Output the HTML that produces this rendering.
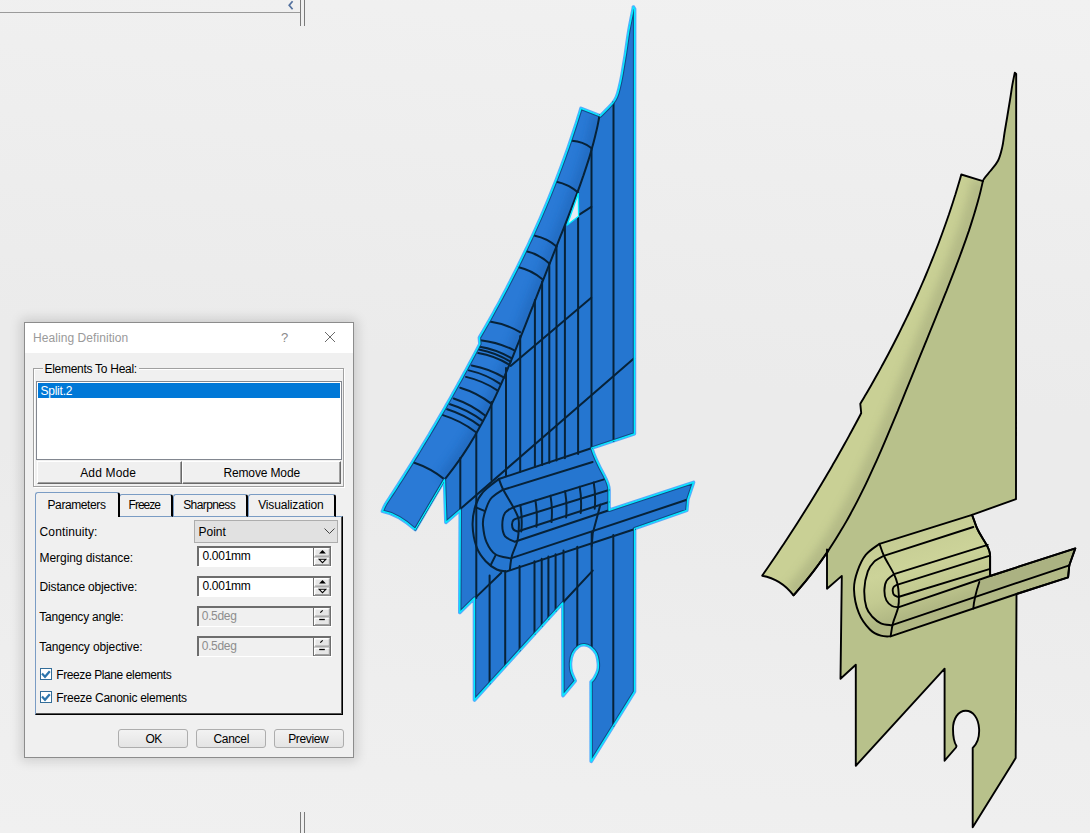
<!DOCTYPE html>
<html><head><meta charset="utf-8">
<style>
html,body{margin:0;padding:0;width:1090px;height:833px;overflow:hidden;}
body{position:relative;background:linear-gradient(185deg,#f1f1f1 0%,#eeeeee 22%,#ebebeb 45%,#ebebeb 58%,#eeeeee 80%,#f0f0f0 100%);font-family:"Liberation Sans",sans-serif;font-size:12px;color:#000;}
.a{position:absolute;}
.t{position:absolute;line-height:12px;white-space:nowrap;font-size:12px;}
#dlg{position:absolute;left:24px;top:322px;width:328px;height:434px;border:1px solid #8c8c8c;background:#f0f0f0;box-shadow:0 0 11px 3px rgba(0,0,0,0.14);}
.etch{position:absolute;border:1px solid #a0a0a0;box-shadow:inset 1px 1px 0 #fff, 1px 1px 0 #fff;}
.btn3d{position:absolute;background:#f0f0f0;border-top:1px solid #fff;border-left:1px solid #fff;border-right:1px solid #696969;border-bottom:1px solid #696969;box-shadow:inset -1px -1px 0 #a0a0a0;box-sizing:border-box;text-align:center;}
.spin{position:absolute;box-sizing:border-box;border-top:2px solid #6d6d6d;border-left:2px solid #6d6d6d;border-bottom:1px solid #fff;border-right:1px solid #fff;background:#fff;}
.spin.dis{background:#f0f0f0;}
.sbtn{position:absolute;box-sizing:border-box;background:#e6e6e6;border-top:1px solid #fff;border-left:1px solid #fff;border-right:1px solid #6d6d6d;border-bottom:1px solid #6d6d6d;}
.pbtn{position:absolute;box-sizing:border-box;border:1px solid #adadad;border-radius:3px;background:linear-gradient(#f2f2f2,#e4e4e4);text-align:center;}
.tab{position:absolute;box-sizing:border-box;border-top:1px solid #7a9cc4;border-left:1px solid #7a9cc4;border-right:2px solid #000;border-radius:3px 3px 0 0;background:#f0f0f0;}
.chk{position:absolute;width:12px;height:12px;box-sizing:border-box;border:1px solid #1d5a84;background:#fff;}
</style></head><body>

<!-- top strip -->
<div class="a" style="left:0;top:12px;width:300px;height:1px;background:#9a9a9a"></div>
<div class="a" style="left:300px;top:0;width:1px;height:26px;background:#7a7a7a"></div>
<div class="a" style="left:304px;top:0;width:1px;height:26px;background:#7a7a7a"></div>
<svg class="a" style="left:285px;top:0" width="12" height="12"><path d="M7.6,1.2 L4.2,5.2 L7.6,9.2" fill="none" stroke="#52709e" stroke-width="1.7"/></svg>
<div class="a" style="left:300px;top:812px;width:1px;height:21px;background:#7a7a7a"></div>
<div class="a" style="left:304px;top:812px;width:1px;height:21px;background:#7a7a7a"></div>

<!-- SVG models -->
<svg class="a" style="left:0;top:0" width="1090" height="833" viewBox="0 0 1090 833" id="models">
<defs>
 <filter id="blur4" x="-20%" y="-20%" width="140%" height="140%"><feGaussianBlur stdDeviation="4"/></filter>
 <linearGradient id="gRib" gradientUnits="userSpaceOnUse" x1="830" y1="450" x2="880" y2="475">
  <stop offset="0" stop-color="#c9d096"/><stop offset="0.5" stop-color="#cbd298"/><stop offset="1" stop-color="#b6be89"/>
 </linearGradient>
 <linearGradient id="gFold" gradientUnits="userSpaceOnUse" x1="900" y1="540" x2="928" y2="630">
  <stop offset="0" stop-color="#c6cd94"/><stop offset="0.3" stop-color="#ccd399"/><stop offset="0.55" stop-color="#c3ca91"/><stop offset="0.8" stop-color="#b0b783"/><stop offset="1" stop-color="#b2b985"/>
 </linearGradient>
 <linearGradient id="bRib" gradientUnits="userSpaceOnUse" x1="450" y1="380" x2="500" y2="405">
  <stop offset="0" stop-color="#2676d2"/><stop offset="0.5" stop-color="#2b7edb"/><stop offset="1" stop-color="#236fc6"/>
 </linearGradient>
</defs>
<g id="blue">
<path d="M633.3,7 L634.6,9 L634.4,433.8 L591.7,448 C594,456 600,468 604.2,475.7 C607,481 609,486 609,490 L609,510.3 L693.5,482.4 L687.7,499.8 L686.8,510.3 L634.6,528.5 L634.5,691.6 L591.2,761.3 L591.1,682 C591.7,681.3 593.4,679.9 594.5,677.9 C595.6,675.9 597.3,672.8 597.9,670.3 C598.5,667.8 598.6,665.5 598.3,662.7 C598.0,659.9 597.5,656.1 596.2,653.5 C594.9,650.9 592.3,648.3 590.3,646.8 C588.3,645.3 586.4,644.8 584.4,644.7 C582.4,644.6 580.5,644.8 578.5,646.3 C576.5,647.8 573.9,650.8 572.6,653.5 C571.3,656.2 570.7,659.6 570.5,662.7 C570.3,665.8 570.6,669.0 571.4,672.0 C572.2,675.0 574.6,679.3 575.2,680.8 L563,695.5 L562.8,602.8 L474.5,700 L474.5,598 L459.8,612.4 L460.3,510 L445.9,522.4 L444.5,479.6 L415.2,529.5 Q398,514 382.4,511.2 C383.0,510.0 384.1,506.9 385.8,504.0 C387.4,501.1 390.2,497.3 392.3,494.0 C394.5,490.7 396.6,487.3 398.7,484.0 C400.9,480.7 403.0,477.3 405.1,474.0 C407.2,470.7 409.3,467.3 411.4,464.0 C413.4,460.7 415.5,457.3 417.6,454.0 C419.6,450.7 421.6,447.3 423.6,444.0 C425.7,440.7 427.7,437.3 429.7,434.0 C431.6,430.7 433.6,427.3 435.6,424.0 C437.5,420.7 439.5,417.3 441.4,414.0 C443.4,410.7 445.3,407.3 447.2,404.0 C449.1,400.7 451.0,397.3 452.8,394.0 C454.7,390.7 456.6,387.3 458.4,384.0 C460.3,380.7 462.1,377.3 463.9,374.0 C465.8,370.7 467.6,367.3 469.3,364.0 C471.1,360.7 472.9,357.3 474.7,354.0 C476.4,350.7 479.0,345.7 479.9,344.0 L479.4,337.7 C480.3,336.1 483.0,331.6 484.8,328.4 C486.7,325.2 488.6,321.7 490.5,318.4 C492.4,315.1 494.2,311.7 496.0,308.4 C497.9,305.1 499.7,301.7 501.5,298.4 C503.2,295.1 505.0,291.7 506.8,288.4 C508.5,285.1 510.2,281.7 511.9,278.4 C513.6,275.1 515.3,271.7 517.0,268.4 C518.6,265.1 520.3,261.7 521.9,258.4 C523.5,255.1 525.1,251.7 526.7,248.4 C528.3,245.1 529.8,241.7 531.4,238.4 C532.9,235.1 534.4,231.7 535.9,228.4 C537.4,225.1 538.9,221.7 540.4,218.4 C541.8,215.1 543.3,211.7 544.7,208.4 C546.1,205.1 547.5,201.7 548.9,198.4 C550.2,195.1 551.6,191.7 552.9,188.4 C554.3,185.1 555.6,181.7 556.9,178.4 C558.2,175.1 559.4,171.7 560.7,168.4 C561.9,165.1 563.2,161.7 564.4,158.4 C565.6,155.1 566.8,151.7 568.0,148.4 C569.1,145.1 570.3,141.7 571.4,138.4 C572.5,135.1 573.6,131.7 574.7,128.4 C575.8,125.1 576.9,121.7 577.9,118.4 C579.0,115.1 580.5,110.1 581.0,108.4 L600.3,116 C601.4,114.9 604.9,111.5 607.0,109.3 C609.1,107.1 611.4,104.8 613.0,102.8 C614.6,100.8 615.5,99.3 616.5,97.0 C617.5,94.7 618.1,92.7 619.0,89.0 C619.9,85.3 621.0,80.7 622.0,75.0 C623.0,69.3 624.1,62.5 625.3,55.0 C626.5,47.5 627.6,38.0 629.0,30.0 C630.4,22.0 632.8,10.8 633.5,7.0 Z" fill="none" stroke="#3aa0ff" stroke-width="3.6" stroke-linejoin="round" opacity="0.85"/>
<path d="M633.3,7 L634.6,9 L634.4,433.8 L591.7,448 C594,456 600,468 604.2,475.7 C607,481 609,486 609,490 L609,510.3 L693.5,482.4 L687.7,499.8 L686.8,510.3 L634.6,528.5 L634.5,691.6 L591.2,761.3 L591.1,682 C591.7,681.3 593.4,679.9 594.5,677.9 C595.6,675.9 597.3,672.8 597.9,670.3 C598.5,667.8 598.6,665.5 598.3,662.7 C598.0,659.9 597.5,656.1 596.2,653.5 C594.9,650.9 592.3,648.3 590.3,646.8 C588.3,645.3 586.4,644.8 584.4,644.7 C582.4,644.6 580.5,644.8 578.5,646.3 C576.5,647.8 573.9,650.8 572.6,653.5 C571.3,656.2 570.7,659.6 570.5,662.7 C570.3,665.8 570.6,669.0 571.4,672.0 C572.2,675.0 574.6,679.3 575.2,680.8 L563,695.5 L562.8,602.8 L474.5,700 L474.5,598 L459.8,612.4 L460.3,510 L445.9,522.4 L444.5,479.6 L415.2,529.5 Q398,514 382.4,511.2 C383.0,510.0 384.1,506.9 385.8,504.0 C387.4,501.1 390.2,497.3 392.3,494.0 C394.5,490.7 396.6,487.3 398.7,484.0 C400.9,480.7 403.0,477.3 405.1,474.0 C407.2,470.7 409.3,467.3 411.4,464.0 C413.4,460.7 415.5,457.3 417.6,454.0 C419.6,450.7 421.6,447.3 423.6,444.0 C425.7,440.7 427.7,437.3 429.7,434.0 C431.6,430.7 433.6,427.3 435.6,424.0 C437.5,420.7 439.5,417.3 441.4,414.0 C443.4,410.7 445.3,407.3 447.2,404.0 C449.1,400.7 451.0,397.3 452.8,394.0 C454.7,390.7 456.6,387.3 458.4,384.0 C460.3,380.7 462.1,377.3 463.9,374.0 C465.8,370.7 467.6,367.3 469.3,364.0 C471.1,360.7 472.9,357.3 474.7,354.0 C476.4,350.7 479.0,345.7 479.9,344.0 L479.4,337.7 C480.3,336.1 483.0,331.6 484.8,328.4 C486.7,325.2 488.6,321.7 490.5,318.4 C492.4,315.1 494.2,311.7 496.0,308.4 C497.9,305.1 499.7,301.7 501.5,298.4 C503.2,295.1 505.0,291.7 506.8,288.4 C508.5,285.1 510.2,281.7 511.9,278.4 C513.6,275.1 515.3,271.7 517.0,268.4 C518.6,265.1 520.3,261.7 521.9,258.4 C523.5,255.1 525.1,251.7 526.7,248.4 C528.3,245.1 529.8,241.7 531.4,238.4 C532.9,235.1 534.4,231.7 535.9,228.4 C537.4,225.1 538.9,221.7 540.4,218.4 C541.8,215.1 543.3,211.7 544.7,208.4 C546.1,205.1 547.5,201.7 548.9,198.4 C550.2,195.1 551.6,191.7 552.9,188.4 C554.3,185.1 555.6,181.7 556.9,178.4 C558.2,175.1 559.4,171.7 560.7,168.4 C561.9,165.1 563.2,161.7 564.4,158.4 C565.6,155.1 566.8,151.7 568.0,148.4 C569.1,145.1 570.3,141.7 571.4,138.4 C572.5,135.1 573.6,131.7 574.7,128.4 C575.8,125.1 576.9,121.7 577.9,118.4 C579.0,115.1 580.5,110.1 581.0,108.4 L600.3,116 C601.4,114.9 604.9,111.5 607.0,109.3 C609.1,107.1 611.4,104.8 613.0,102.8 C614.6,100.8 615.5,99.3 616.5,97.0 C617.5,94.7 618.1,92.7 619.0,89.0 C619.9,85.3 621.0,80.7 622.0,75.0 C623.0,69.3 624.1,62.5 625.3,55.0 C626.5,47.5 627.6,38.0 629.0,30.0 C630.4,22.0 632.8,10.8 633.5,7.0 Z" fill="#2576d0"/>
<clipPath id="bRibClip"><path d="M599.5,115.6 C599.1,117.3 598.3,122.3 597.6,125.6 C596.9,128.9 596.1,132.3 595.3,135.6 C594.5,138.9 593.7,142.3 592.7,145.6 C591.8,148.9 590.9,152.3 589.9,155.6 C588.9,158.9 587.8,162.3 586.7,165.6 C585.6,168.9 584.5,172.3 583.4,175.6 C582.2,178.9 581.1,182.3 579.9,185.6 C578.7,188.9 577.4,192.3 576.2,195.6 C575.0,198.9 573.7,202.3 572.4,205.6 C571.2,208.9 569.9,212.3 568.6,215.6 C567.3,218.9 566.0,222.3 564.7,225.6 C563.4,228.9 562.1,232.3 560.7,235.6 C559.4,238.9 558.1,242.3 556.8,245.6 C555.5,248.9 554.1,252.3 552.8,255.6 C551.5,258.9 550.2,262.3 548.8,265.6 C547.5,268.9 546.2,272.3 544.9,275.6 C543.6,278.9 542.2,282.3 540.9,285.6 C539.6,288.9 538.3,292.3 537.0,295.6 C535.7,298.9 534.4,302.3 533.1,305.6 C531.7,308.9 530.4,312.3 529.1,315.6 C527.8,318.9 526.5,322.3 525.2,325.6 C523.9,328.9 522.5,332.3 521.2,335.6 C519.9,338.9 518.6,342.3 517.2,345.6 C515.9,348.9 514.5,352.3 513.2,355.6 C511.8,358.9 510.4,362.3 509.0,365.6 C507.6,368.9 506.2,372.3 504.8,375.6 C503.3,378.9 501.9,382.3 500.4,385.6 C498.9,388.9 497.3,392.3 495.8,395.6 C494.2,398.9 492.6,402.3 491.0,405.6 C489.4,408.9 487.7,412.3 486.0,415.6 C484.2,418.9 482.5,422.3 480.6,425.6 C478.8,428.9 476.9,432.3 475.0,435.6 C473.0,438.9 471.0,442.3 468.9,445.6 C466.8,448.9 464.6,452.3 462.4,455.6 C460.1,458.9 457.8,462.3 455.3,465.6 C452.9,468.9 449.5,473.3 447.7,475.6 C445.9,477.9 445.1,478.9 444.5,479.6 L415.2,529.5 Q398,514 382.4,511.2 C383.0,510.0 384.1,506.9 385.8,504.0 C387.4,501.1 390.2,497.3 392.3,494.0 C394.5,490.7 396.6,487.3 398.7,484.0 C400.9,480.7 403.0,477.3 405.1,474.0 C407.2,470.7 409.3,467.3 411.4,464.0 C413.4,460.7 415.5,457.3 417.6,454.0 C419.6,450.7 421.6,447.3 423.6,444.0 C425.7,440.7 427.7,437.3 429.7,434.0 C431.6,430.7 433.6,427.3 435.6,424.0 C437.5,420.7 439.5,417.3 441.4,414.0 C443.4,410.7 445.3,407.3 447.2,404.0 C449.1,400.7 451.0,397.3 452.8,394.0 C454.7,390.7 456.6,387.3 458.4,384.0 C460.3,380.7 462.1,377.3 463.9,374.0 C465.8,370.7 467.6,367.3 469.3,364.0 C471.1,360.7 472.9,357.3 474.7,354.0 C476.4,350.7 479.0,345.7 479.9,344.0 L479.4,337.7 C480.3,336.1 483.0,331.6 484.8,328.4 C486.7,325.2 488.6,321.7 490.5,318.4 C492.4,315.1 494.2,311.7 496.0,308.4 C497.9,305.1 499.7,301.7 501.5,298.4 C503.2,295.1 505.0,291.7 506.8,288.4 C508.5,285.1 510.2,281.7 511.9,278.4 C513.6,275.1 515.3,271.7 517.0,268.4 C518.6,265.1 520.3,261.7 521.9,258.4 C523.5,255.1 525.1,251.7 526.7,248.4 C528.3,245.1 529.8,241.7 531.4,238.4 C532.9,235.1 534.4,231.7 535.9,228.4 C537.4,225.1 538.9,221.7 540.4,218.4 C541.8,215.1 543.3,211.7 544.7,208.4 C546.1,205.1 547.5,201.7 548.9,198.4 C550.2,195.1 551.6,191.7 552.9,188.4 C554.3,185.1 555.6,181.7 556.9,178.4 C558.2,175.1 559.4,171.7 560.7,168.4 C561.9,165.1 563.2,161.7 564.4,158.4 C565.6,155.1 566.8,151.7 568.0,148.4 C569.1,145.1 570.3,141.7 571.4,138.4 C572.5,135.1 573.6,131.7 574.7,128.4 C575.8,125.1 576.9,121.7 577.9,118.4 C579.0,115.1 580.5,110.1 581.0,108.4 Z"/></clipPath>
<path d="M599.5,115.6 C599.1,117.3 598.3,122.3 597.6,125.6 C596.9,128.9 596.1,132.3 595.3,135.6 C594.5,138.9 593.7,142.3 592.7,145.6 C591.8,148.9 590.9,152.3 589.9,155.6 C588.9,158.9 587.8,162.3 586.7,165.6 C585.6,168.9 584.5,172.3 583.4,175.6 C582.2,178.9 581.1,182.3 579.9,185.6 C578.7,188.9 577.4,192.3 576.2,195.6 C575.0,198.9 573.7,202.3 572.4,205.6 C571.2,208.9 569.9,212.3 568.6,215.6 C567.3,218.9 566.0,222.3 564.7,225.6 C563.4,228.9 562.1,232.3 560.7,235.6 C559.4,238.9 558.1,242.3 556.8,245.6 C555.5,248.9 554.1,252.3 552.8,255.6 C551.5,258.9 550.2,262.3 548.8,265.6 C547.5,268.9 546.2,272.3 544.9,275.6 C543.6,278.9 542.2,282.3 540.9,285.6 C539.6,288.9 538.3,292.3 537.0,295.6 C535.7,298.9 534.4,302.3 533.1,305.6 C531.7,308.9 530.4,312.3 529.1,315.6 C527.8,318.9 526.5,322.3 525.2,325.6 C523.9,328.9 522.5,332.3 521.2,335.6 C519.9,338.9 518.6,342.3 517.2,345.6 C515.9,348.9 514.5,352.3 513.2,355.6 C511.8,358.9 510.4,362.3 509.0,365.6 C507.6,368.9 506.2,372.3 504.8,375.6 C503.3,378.9 501.9,382.3 500.4,385.6 C498.9,388.9 497.3,392.3 495.8,395.6 C494.2,398.9 492.6,402.3 491.0,405.6 C489.4,408.9 487.7,412.3 486.0,415.6 C484.2,418.9 482.5,422.3 480.6,425.6 C478.8,428.9 476.9,432.3 475.0,435.6 C473.0,438.9 471.0,442.3 468.9,445.6 C466.8,448.9 464.6,452.3 462.4,455.6 C460.1,458.9 457.8,462.3 455.3,465.6 C452.9,468.9 449.5,473.3 447.7,475.6 C445.9,477.9 445.1,478.9 444.5,479.6 L415.2,529.5 Q398,514 382.4,511.2 C383.0,510.0 384.1,506.9 385.8,504.0 C387.4,501.1 390.2,497.3 392.3,494.0 C394.5,490.7 396.6,487.3 398.7,484.0 C400.9,480.7 403.0,477.3 405.1,474.0 C407.2,470.7 409.3,467.3 411.4,464.0 C413.4,460.7 415.5,457.3 417.6,454.0 C419.6,450.7 421.6,447.3 423.6,444.0 C425.7,440.7 427.7,437.3 429.7,434.0 C431.6,430.7 433.6,427.3 435.6,424.0 C437.5,420.7 439.5,417.3 441.4,414.0 C443.4,410.7 445.3,407.3 447.2,404.0 C449.1,400.7 451.0,397.3 452.8,394.0 C454.7,390.7 456.6,387.3 458.4,384.0 C460.3,380.7 462.1,377.3 463.9,374.0 C465.8,370.7 467.6,367.3 469.3,364.0 C471.1,360.7 472.9,357.3 474.7,354.0 C476.4,350.7 479.0,345.7 479.9,344.0 L479.4,337.7 C480.3,336.1 483.0,331.6 484.8,328.4 C486.7,325.2 488.6,321.7 490.5,318.4 C492.4,315.1 494.2,311.7 496.0,308.4 C497.9,305.1 499.7,301.7 501.5,298.4 C503.2,295.1 505.0,291.7 506.8,288.4 C508.5,285.1 510.2,281.7 511.9,278.4 C513.6,275.1 515.3,271.7 517.0,268.4 C518.6,265.1 520.3,261.7 521.9,258.4 C523.5,255.1 525.1,251.7 526.7,248.4 C528.3,245.1 529.8,241.7 531.4,238.4 C532.9,235.1 534.4,231.7 535.9,228.4 C537.4,225.1 538.9,221.7 540.4,218.4 C541.8,215.1 543.3,211.7 544.7,208.4 C546.1,205.1 547.5,201.7 548.9,198.4 C550.2,195.1 551.6,191.7 552.9,188.4 C554.3,185.1 555.6,181.7 556.9,178.4 C558.2,175.1 559.4,171.7 560.7,168.4 C561.9,165.1 563.2,161.7 564.4,158.4 C565.6,155.1 566.8,151.7 568.0,148.4 C569.1,145.1 570.3,141.7 571.4,138.4 C572.5,135.1 573.6,131.7 574.7,128.4 C575.8,125.1 576.9,121.7 577.9,118.4 C579.0,115.1 580.5,110.1 581.0,108.4 Z" fill="#2a7ad6"/>
<g clip-path="url(#bRibClip)"><path d="M599.5,115.6 C599.1,117.3 598.3,122.3 597.6,125.6 C596.9,128.9 596.1,132.3 595.3,135.6 C594.5,138.9 593.7,142.3 592.7,145.6 C591.8,148.9 590.9,152.3 589.9,155.6 C588.9,158.9 587.8,162.3 586.7,165.6 C585.6,168.9 584.5,172.3 583.4,175.6 C582.2,178.9 581.1,182.3 579.9,185.6 C578.7,188.9 577.4,192.3 576.2,195.6 C575.0,198.9 573.7,202.3 572.4,205.6 C571.2,208.9 569.9,212.3 568.6,215.6 C567.3,218.9 566.0,222.3 564.7,225.6 C563.4,228.9 562.1,232.3 560.7,235.6 C559.4,238.9 558.1,242.3 556.8,245.6 C555.5,248.9 554.1,252.3 552.8,255.6 C551.5,258.9 550.2,262.3 548.8,265.6 C547.5,268.9 546.2,272.3 544.9,275.6 C543.6,278.9 542.2,282.3 540.9,285.6 C539.6,288.9 538.3,292.3 537.0,295.6 C535.7,298.9 534.4,302.3 533.1,305.6 C531.7,308.9 530.4,312.3 529.1,315.6 C527.8,318.9 526.5,322.3 525.2,325.6 C523.9,328.9 522.5,332.3 521.2,335.6 C519.9,338.9 518.6,342.3 517.2,345.6 C515.9,348.9 514.5,352.3 513.2,355.6 C511.8,358.9 510.4,362.3 509.0,365.6 C507.6,368.9 506.2,372.3 504.8,375.6 C503.3,378.9 501.9,382.3 500.4,385.6 C498.9,388.9 497.3,392.3 495.8,395.6 C494.2,398.9 492.6,402.3 491.0,405.6 C489.4,408.9 487.7,412.3 486.0,415.6 C484.2,418.9 482.5,422.3 480.6,425.6 C478.8,428.9 476.9,432.3 475.0,435.6 C473.0,438.9 471.0,442.3 468.9,445.6 C466.8,448.9 464.6,452.3 462.4,455.6 C460.1,458.9 457.8,462.3 455.3,465.6 C452.9,468.9 449.5,473.3 447.7,475.6 C445.9,477.9 445.1,478.9 444.5,479.6" fill="none" stroke="#1c62b4" stroke-width="16" opacity="0.55" filter="url(#blur4)"/></g>
<g fill="none" stroke="#072238" stroke-width="2" stroke-linecap="round" stroke-linejoin="round">
<path d="M599.5,115.6 C599.1,117.3 598.3,122.3 597.6,125.6 C596.9,128.9 596.1,132.3 595.3,135.6 C594.5,138.9 593.7,142.3 592.7,145.6 C591.8,148.9 590.9,152.3 589.9,155.6 C588.9,158.9 587.8,162.3 586.7,165.6 C585.6,168.9 584.5,172.3 583.4,175.6 C582.2,178.9 581.1,182.3 579.9,185.6 C578.7,188.9 577.4,192.3 576.2,195.6 C575.0,198.9 573.7,202.3 572.4,205.6 C571.2,208.9 569.9,212.3 568.6,215.6 C567.3,218.9 566.0,222.3 564.7,225.6 C563.4,228.9 562.1,232.3 560.7,235.6 C559.4,238.9 558.1,242.3 556.8,245.6 C555.5,248.9 554.1,252.3 552.8,255.6 C551.5,258.9 550.2,262.3 548.8,265.6 C547.5,268.9 546.2,272.3 544.9,275.6 C543.6,278.9 542.2,282.3 540.9,285.6 C539.6,288.9 538.3,292.3 537.0,295.6 C535.7,298.9 534.4,302.3 533.1,305.6 C531.7,308.9 530.4,312.3 529.1,315.6 C527.8,318.9 526.5,322.3 525.2,325.6 C523.9,328.9 522.5,332.3 521.2,335.6 C519.9,338.9 518.6,342.3 517.2,345.6 C515.9,348.9 514.5,352.3 513.2,355.6 C511.8,358.9 510.4,362.3 509.0,365.6 C507.6,368.9 506.2,372.3 504.8,375.6 C503.3,378.9 501.9,382.3 500.4,385.6 C498.9,388.9 497.3,392.3 495.8,395.6 C494.2,398.9 492.6,402.3 491.0,405.6 C489.4,408.9 487.7,412.3 486.0,415.6 C484.2,418.9 482.5,422.3 480.6,425.6 C478.8,428.9 476.9,432.3 475.0,435.6 C473.0,438.9 471.0,442.3 468.9,445.6 C466.8,448.9 464.6,452.3 462.4,455.6 C460.1,458.9 457.8,462.3 455.3,465.6 C452.9,468.9 449.5,473.3 447.7,475.6 C445.9,477.9 445.1,478.9 444.5,479.6 L415.2,529.5"/>
<path d="M613.5,102 V440.9 M591.5,148 V448 M578.1,215.3 V453.9 M564.9,226.1 V458.3 M556.5,246.5 V460.6 M549.3,263.4 V462.7 M542.1,281.4 V465 M534.9,300 V467.1 M520.2,336 V471.8 M506,368 V476.2 M491.5,402 V480 M476.3,433 V598 M460.3,458 V510"/>
<path d="M489.6,575.4 V683.4 M505.2,570.9 V666.2 M519.6,566.1 V650.4 M534.5,561.2 V634 M541.7,558.8 V626.1 M548.4,556.6 V618.7 M555.6,554.2 V610.8 M563.5,550.5 V602.5 M577.3,546.8 V646 M591.7,532 V646.5 M613.3,535 V726"/>
<path d="M591.2,297.8 L510.6,365.9 M634.1,358.3 L460.3,509 M591.3,206.9 L578.1,215.3 M501.3,572.7 L474.5,598.6 M592.7,570.6 L562.8,602.8"/>
<path d="M572.1,140.8 Q582.8,141.4 591.3,148.0 M556.5,181.7 Q568.7,184.2 578.1,192.5 M534.9,235.7 Q547.1,238.2 556.5,246.5 M526.5,251.3 Q539.4,254.5 549.3,263.4 M518.0,267.0 Q531.5,270.1 542.1,279.0 M489.8,321.4 Q506.0,323.8 520.0,332.2 M480.4,340.2 Q498.3,342.2 514.3,350.3 M479.7,346.7 Q496.6,349.4 511.4,358.2 M479.0,349.5 Q496.0,352.7 510.6,361.8 M478.2,353.1 Q494.8,355.9 509.2,364.7 M471.7,365.4 Q489.1,368.5 504.2,377.6 M468.9,370.4 Q486.0,374.3 500.6,384.1 M466.0,376.9 Q483.1,380.8 497.7,390.6 M460.2,387.7 Q477.2,392.8 491.2,403.6 M453.7,398.5 Q471.1,404.3 485.4,415.8 M450.1,404.3 Q467.8,409.8 482.6,420.9 M447.2,409.3 Q464.9,414.8 479.7,425.9 M442.9,415.1 Q460.6,420.6 475.3,431.7 M413.7,462.5 Q430.8,468.2 444.9,479.6"/>
<path d="M592,448 L498.9,479 C496.2,481.2 486.9,487.6 483.0,492.1 C479.1,496.6 477.1,500.4 475.4,505.9 C473.7,511.4 472.4,518.4 472.6,525.3 C472.8,532.2 474.5,541.4 476.7,547.4 C478.9,553.4 482.3,557.5 485.7,561.2 C489.1,564.9 493.4,567.8 496.8,569.5 C500.2,571.2 504.8,571.2 506.4,571.5 L635,529"/>
<path d="M592.6,462 L502.3,490 C500.4,491.5 493.6,495.0 490.6,499.0 C487.6,503.0 485.6,509.8 484.3,514.2 C483.0,518.6 482.6,520.7 483.0,525.3 C483.4,529.9 484.3,537.0 486.4,541.8 C488.5,546.6 491.4,551.5 495.4,554.3 C499.4,557.1 508.1,557.7 510.6,558.4 L686.8,499.8"/>
<path d="M604,479.4 L513.4,507.3 C512.0,508.2 507.0,509.8 505.1,512.8 C503.2,515.8 502.3,521.4 502.3,525.3 C502.3,529.2 503.0,533.5 505.1,536.3 C507.2,539.0 513.1,540.9 514.7,541.8 L609,510.3"/>
<path d="M609,490 L518.9,517.7 C518.0,518.1 514.6,518.9 513.5,520.0 C512.4,521.1 512.0,523.0 512.0,524.6 C512.0,526.2 512.6,528.4 513.5,529.5 C514.4,530.6 516.8,531.2 517.5,531.5 L609,502"/>
<path d="M498.9,479.0 C499.6,480.7 500.6,484.6 503.0,489.3 C505.4,494.0 510.9,502.6 513.4,507.3 C515.9,512.0 517.3,514.7 518.2,517.7 C519.1,520.7 519.0,521.5 518.9,525.3 C518.8,529.1 518.6,535.3 517.5,540.4 C516.4,545.5 513.3,550.8 512.0,555.6 C510.7,560.5 510.2,567.2 509.9,569.5 M476,507.3 L484.3,510.8 M490.6,565.3 L495.4,555.6"/>
<path d="M520.3,505.2 Q522.5,518.3 521.3,531.4 M535.4,500.5 Q537.6,513.6 536.4,526.8 M550.5,495.8 Q552.7,508.9 551.5,522.1 M565.1,491.3 Q567.3,504.4 566.1,517.5 M579.7,486.7 Q581.9,499.9 580.7,513.0 M593.7,482.4 Q595.9,495.5 594.7,508.7 M600.4,504.6 L592.7,533.5 L591.7,546"/>
</g>
<clipPath id="bOutClip"><path d="M633.3,7 L634.6,9 L634.4,433.8 L591.7,448 C594,456 600,468 604.2,475.7 C607,481 609,486 609,490 L609,510.3 L693.5,482.4 L687.7,499.8 L686.8,510.3 L634.6,528.5 L634.5,691.6 L591.2,761.3 L591.1,682 C591.7,681.3 593.4,679.9 594.5,677.9 C595.6,675.9 597.3,672.8 597.9,670.3 C598.5,667.8 598.6,665.5 598.3,662.7 C598.0,659.9 597.5,656.1 596.2,653.5 C594.9,650.9 592.3,648.3 590.3,646.8 C588.3,645.3 586.4,644.8 584.4,644.7 C582.4,644.6 580.5,644.8 578.5,646.3 C576.5,647.8 573.9,650.8 572.6,653.5 C571.3,656.2 570.7,659.6 570.5,662.7 C570.3,665.8 570.6,669.0 571.4,672.0 C572.2,675.0 574.6,679.3 575.2,680.8 L563,695.5 L562.8,602.8 L474.5,700 L474.5,598 L459.8,612.4 L460.3,510 L445.9,522.4 L444.5,479.6 L415.2,529.5 Q398,514 382.4,511.2 C383.0,510.0 384.1,506.9 385.8,504.0 C387.4,501.1 390.2,497.3 392.3,494.0 C394.5,490.7 396.6,487.3 398.7,484.0 C400.9,480.7 403.0,477.3 405.1,474.0 C407.2,470.7 409.3,467.3 411.4,464.0 C413.4,460.7 415.5,457.3 417.6,454.0 C419.6,450.7 421.6,447.3 423.6,444.0 C425.7,440.7 427.7,437.3 429.7,434.0 C431.6,430.7 433.6,427.3 435.6,424.0 C437.5,420.7 439.5,417.3 441.4,414.0 C443.4,410.7 445.3,407.3 447.2,404.0 C449.1,400.7 451.0,397.3 452.8,394.0 C454.7,390.7 456.6,387.3 458.4,384.0 C460.3,380.7 462.1,377.3 463.9,374.0 C465.8,370.7 467.6,367.3 469.3,364.0 C471.1,360.7 472.9,357.3 474.7,354.0 C476.4,350.7 479.0,345.7 479.9,344.0 L479.4,337.7 C480.3,336.1 483.0,331.6 484.8,328.4 C486.7,325.2 488.6,321.7 490.5,318.4 C492.4,315.1 494.2,311.7 496.0,308.4 C497.9,305.1 499.7,301.7 501.5,298.4 C503.2,295.1 505.0,291.7 506.8,288.4 C508.5,285.1 510.2,281.7 511.9,278.4 C513.6,275.1 515.3,271.7 517.0,268.4 C518.6,265.1 520.3,261.7 521.9,258.4 C523.5,255.1 525.1,251.7 526.7,248.4 C528.3,245.1 529.8,241.7 531.4,238.4 C532.9,235.1 534.4,231.7 535.9,228.4 C537.4,225.1 538.9,221.7 540.4,218.4 C541.8,215.1 543.3,211.7 544.7,208.4 C546.1,205.1 547.5,201.7 548.9,198.4 C550.2,195.1 551.6,191.7 552.9,188.4 C554.3,185.1 555.6,181.7 556.9,178.4 C558.2,175.1 559.4,171.7 560.7,168.4 C561.9,165.1 563.2,161.7 564.4,158.4 C565.6,155.1 566.8,151.7 568.0,148.4 C569.1,145.1 570.3,141.7 571.4,138.4 C572.5,135.1 573.6,131.7 574.7,128.4 C575.8,125.1 576.9,121.7 577.9,118.4 C579.0,115.1 580.5,110.1 581.0,108.4 L600.3,116 C601.4,114.9 604.9,111.5 607.0,109.3 C609.1,107.1 611.4,104.8 613.0,102.8 C614.6,100.8 615.5,99.3 616.5,97.0 C617.5,94.7 618.1,92.7 619.0,89.0 C619.9,85.3 621.0,80.7 622.0,75.0 C623.0,69.3 624.1,62.5 625.3,55.0 C626.5,47.5 627.6,38.0 629.0,30.0 C630.4,22.0 632.8,10.8 633.5,7.0 Z"/></clipPath>
<path d="M633.3,7 L634.6,9 L634.4,433.8 L591.7,448 C594,456 600,468 604.2,475.7 C607,481 609,486 609,490 L609,510.3 L693.5,482.4 L687.7,499.8 L686.8,510.3 L634.6,528.5 L634.5,691.6 L591.2,761.3 L591.1,682 C591.7,681.3 593.4,679.9 594.5,677.9 C595.6,675.9 597.3,672.8 597.9,670.3 C598.5,667.8 598.6,665.5 598.3,662.7 C598.0,659.9 597.5,656.1 596.2,653.5 C594.9,650.9 592.3,648.3 590.3,646.8 C588.3,645.3 586.4,644.8 584.4,644.7 C582.4,644.6 580.5,644.8 578.5,646.3 C576.5,647.8 573.9,650.8 572.6,653.5 C571.3,656.2 570.7,659.6 570.5,662.7 C570.3,665.8 570.6,669.0 571.4,672.0 C572.2,675.0 574.6,679.3 575.2,680.8 L563,695.5 L562.8,602.8 L474.5,700 L474.5,598 L459.8,612.4 L460.3,510 L445.9,522.4 L444.5,479.6 L415.2,529.5 Q398,514 382.4,511.2 C383.0,510.0 384.1,506.9 385.8,504.0 C387.4,501.1 390.2,497.3 392.3,494.0 C394.5,490.7 396.6,487.3 398.7,484.0 C400.9,480.7 403.0,477.3 405.1,474.0 C407.2,470.7 409.3,467.3 411.4,464.0 C413.4,460.7 415.5,457.3 417.6,454.0 C419.6,450.7 421.6,447.3 423.6,444.0 C425.7,440.7 427.7,437.3 429.7,434.0 C431.6,430.7 433.6,427.3 435.6,424.0 C437.5,420.7 439.5,417.3 441.4,414.0 C443.4,410.7 445.3,407.3 447.2,404.0 C449.1,400.7 451.0,397.3 452.8,394.0 C454.7,390.7 456.6,387.3 458.4,384.0 C460.3,380.7 462.1,377.3 463.9,374.0 C465.8,370.7 467.6,367.3 469.3,364.0 C471.1,360.7 472.9,357.3 474.7,354.0 C476.4,350.7 479.0,345.7 479.9,344.0 L479.4,337.7 C480.3,336.1 483.0,331.6 484.8,328.4 C486.7,325.2 488.6,321.7 490.5,318.4 C492.4,315.1 494.2,311.7 496.0,308.4 C497.9,305.1 499.7,301.7 501.5,298.4 C503.2,295.1 505.0,291.7 506.8,288.4 C508.5,285.1 510.2,281.7 511.9,278.4 C513.6,275.1 515.3,271.7 517.0,268.4 C518.6,265.1 520.3,261.7 521.9,258.4 C523.5,255.1 525.1,251.7 526.7,248.4 C528.3,245.1 529.8,241.7 531.4,238.4 C532.9,235.1 534.4,231.7 535.9,228.4 C537.4,225.1 538.9,221.7 540.4,218.4 C541.8,215.1 543.3,211.7 544.7,208.4 C546.1,205.1 547.5,201.7 548.9,198.4 C550.2,195.1 551.6,191.7 552.9,188.4 C554.3,185.1 555.6,181.7 556.9,178.4 C558.2,175.1 559.4,171.7 560.7,168.4 C561.9,165.1 563.2,161.7 564.4,158.4 C565.6,155.1 566.8,151.7 568.0,148.4 C569.1,145.1 570.3,141.7 571.4,138.4 C572.5,135.1 573.6,131.7 574.7,128.4 C575.8,125.1 576.9,121.7 577.9,118.4 C579.0,115.1 580.5,110.1 581.0,108.4 L600.3,116 C601.4,114.9 604.9,111.5 607.0,109.3 C609.1,107.1 611.4,104.8 613.0,102.8 C614.6,100.8 615.5,99.3 616.5,97.0 C617.5,94.7 618.1,92.7 619.0,89.0 C619.9,85.3 621.0,80.7 622.0,75.0 C623.0,69.3 624.1,62.5 625.3,55.0 C626.5,47.5 627.6,38.0 629.0,30.0 C630.4,22.0 632.8,10.8 633.5,7.0 Z" fill="none" stroke="#0f3f78" stroke-width="3.4" stroke-linejoin="round" clip-path="url(#bOutClip)" opacity="0.8"/>
<path d="M633.3,7 L634.6,9 L634.4,433.8 L591.7,448 C594,456 600,468 604.2,475.7 C607,481 609,486 609,490 L609,510.3 L693.5,482.4 L687.7,499.8 L686.8,510.3 L634.6,528.5 L634.5,691.6 L591.2,761.3 L591.1,682 C591.7,681.3 593.4,679.9 594.5,677.9 C595.6,675.9 597.3,672.8 597.9,670.3 C598.5,667.8 598.6,665.5 598.3,662.7 C598.0,659.9 597.5,656.1 596.2,653.5 C594.9,650.9 592.3,648.3 590.3,646.8 C588.3,645.3 586.4,644.8 584.4,644.7 C582.4,644.6 580.5,644.8 578.5,646.3 C576.5,647.8 573.9,650.8 572.6,653.5 C571.3,656.2 570.7,659.6 570.5,662.7 C570.3,665.8 570.6,669.0 571.4,672.0 C572.2,675.0 574.6,679.3 575.2,680.8 L563,695.5 L562.8,602.8 L474.5,700 L474.5,598 L459.8,612.4 L460.3,510 L445.9,522.4 L444.5,479.6 L415.2,529.5 Q398,514 382.4,511.2 C383.0,510.0 384.1,506.9 385.8,504.0 C387.4,501.1 390.2,497.3 392.3,494.0 C394.5,490.7 396.6,487.3 398.7,484.0 C400.9,480.7 403.0,477.3 405.1,474.0 C407.2,470.7 409.3,467.3 411.4,464.0 C413.4,460.7 415.5,457.3 417.6,454.0 C419.6,450.7 421.6,447.3 423.6,444.0 C425.7,440.7 427.7,437.3 429.7,434.0 C431.6,430.7 433.6,427.3 435.6,424.0 C437.5,420.7 439.5,417.3 441.4,414.0 C443.4,410.7 445.3,407.3 447.2,404.0 C449.1,400.7 451.0,397.3 452.8,394.0 C454.7,390.7 456.6,387.3 458.4,384.0 C460.3,380.7 462.1,377.3 463.9,374.0 C465.8,370.7 467.6,367.3 469.3,364.0 C471.1,360.7 472.9,357.3 474.7,354.0 C476.4,350.7 479.0,345.7 479.9,344.0 L479.4,337.7 C480.3,336.1 483.0,331.6 484.8,328.4 C486.7,325.2 488.6,321.7 490.5,318.4 C492.4,315.1 494.2,311.7 496.0,308.4 C497.9,305.1 499.7,301.7 501.5,298.4 C503.2,295.1 505.0,291.7 506.8,288.4 C508.5,285.1 510.2,281.7 511.9,278.4 C513.6,275.1 515.3,271.7 517.0,268.4 C518.6,265.1 520.3,261.7 521.9,258.4 C523.5,255.1 525.1,251.7 526.7,248.4 C528.3,245.1 529.8,241.7 531.4,238.4 C532.9,235.1 534.4,231.7 535.9,228.4 C537.4,225.1 538.9,221.7 540.4,218.4 C541.8,215.1 543.3,211.7 544.7,208.4 C546.1,205.1 547.5,201.7 548.9,198.4 C550.2,195.1 551.6,191.7 552.9,188.4 C554.3,185.1 555.6,181.7 556.9,178.4 C558.2,175.1 559.4,171.7 560.7,168.4 C561.9,165.1 563.2,161.7 564.4,158.4 C565.6,155.1 566.8,151.7 568.0,148.4 C569.1,145.1 570.3,141.7 571.4,138.4 C572.5,135.1 573.6,131.7 574.7,128.4 C575.8,125.1 576.9,121.7 577.9,118.4 C579.0,115.1 580.5,110.1 581.0,108.4 L600.3,116 C601.4,114.9 604.9,111.5 607.0,109.3 C609.1,107.1 611.4,104.8 613.0,102.8 C614.6,100.8 615.5,99.3 616.5,97.0 C617.5,94.7 618.1,92.7 619.0,89.0 C619.9,85.3 621.0,80.7 622.0,75.0 C623.0,69.3 624.1,62.5 625.3,55.0 C626.5,47.5 627.6,38.0 629.0,30.0 C630.4,22.0 632.8,10.8 633.5,7.0 Z" fill="none" stroke="#00f0ff" stroke-width="1.3" stroke-linejoin="round"/>
<path d="M578.3,193.5 L567.2,225 L578.6,216.3 Z" fill="#e4ecf4" stroke="#00eeff" stroke-width="1.3" stroke-linejoin="round"/>
</g>
<g id="green">
<path d="M1014.8,72.6 L1016.2,74 L1016,499.2 L972.1,514.8 C974,520 976,526 976.9,528 C980,535 984,540 986.5,544.8 C989,549 990.1,552 990.1,556 L990.1,576 L1075.3,548.4 L1069.3,565.3 L1068.1,577.3 L1016.5,594 L1015.7,758.1 L972.7,827.2 L972.7,748 C977,744 979.5,737 979.1,729 C978.5,718 973,710.8 965.8,710.8 C958,710.8 953,719 953,729 C953,737 954.5,743 956.5,746 L956,747.5 L944.6,760.7 L944.6,668.6 L855.8,765.8 L855.8,664.8 L840.5,678.8 L841.8,575.9 L827,588.7 L827,549.4 L828.0,551.1 L821.0,561.1 L813.6,571.1 L805.7,581.1 L797.2,591.1 L793.5,595.3 Q781,579 762.2,575.7 C762.5,575.2 762.6,575.1 764.0,573.0 C765.5,570.9 768.7,566.3 770.9,563.0 C773.2,559.7 775.5,556.3 777.7,553.0 C780.0,549.7 782.2,546.3 784.4,543.0 C786.6,539.7 788.8,536.3 790.9,533.0 C793.1,529.7 795.3,526.3 797.4,523.0 C799.5,519.7 801.6,516.3 803.7,513.0 C805.8,509.7 807.9,506.3 810.0,503.0 C812.0,499.7 814.1,496.3 816.1,493.0 C818.1,489.7 820.1,486.3 822.1,483.0 C824.1,479.7 826.1,476.3 828.0,473.0 C830.0,469.7 831.9,466.3 833.8,463.0 C835.8,459.7 837.7,456.3 839.5,453.0 C841.4,449.7 843.3,446.3 845.1,443.0 C847.0,439.7 848.8,436.3 850.6,433.0 C852.4,429.7 854.2,426.3 856.0,423.0 C857.8,419.7 860.4,414.7 861.2,413.0 L860.3,403.8 C861.2,402.2 863.9,397.7 865.8,394.5 C867.7,391.3 869.7,387.8 871.6,384.5 C873.5,381.2 875.3,377.8 877.2,374.5 C879.1,371.2 880.9,367.8 882.7,364.5 C884.5,361.2 886.3,357.8 888.1,354.5 C889.8,351.2 891.6,347.8 893.3,344.5 C895.0,341.2 896.7,337.8 898.4,334.5 C900.1,331.2 901.7,327.8 903.3,324.5 C905.0,321.2 906.6,317.8 908.2,314.5 C909.7,311.2 911.3,307.8 912.8,304.5 C914.4,301.2 915.9,297.8 917.4,294.5 C918.9,291.2 920.4,287.8 921.8,284.5 C923.2,281.2 924.7,277.8 926.1,274.5 C927.5,271.2 928.9,267.8 930.2,264.5 C931.6,261.2 932.9,257.8 934.2,254.5 C935.5,251.2 936.8,247.8 938.1,244.5 C939.3,241.2 940.6,237.8 941.8,234.5 C943.0,231.2 944.2,227.8 945.4,224.5 C946.6,221.2 947.7,217.8 948.9,214.5 C950.0,211.2 951.1,207.8 952.2,204.5 C953.3,201.2 954.3,197.8 955.4,194.5 C956.4,191.2 957.4,187.8 958.4,184.5 C959.4,181.2 960.9,176.2 961.3,174.5 L982.9,181.1 C982.6,179.4 987.6,174.4 990.4,171.0 C993.2,167.6 996.0,164.7 998.0,160.8 C1000.0,156.9 1001.1,152.0 1002.2,147.4 C1003.3,142.8 1003.7,138.1 1004.5,133.0 C1005.3,127.9 1006.3,122.5 1007.2,117.0 C1008.1,111.5 1009.1,105.3 1010.0,100.0 C1010.9,94.7 1011.5,89.8 1012.3,85.2 C1013.1,80.6 1014.4,74.7 1014.8,72.6 Z" fill="#b8c18b"/>
<clipPath id="gRibClip"><path d="M982.9,181.1 C982.5,182.8 981.4,187.8 980.6,191.1 C979.8,194.4 978.9,197.8 978.0,201.1 C977.1,204.4 976.1,207.8 975.1,211.1 C974.1,214.4 973.1,217.8 972.0,221.1 C971.0,224.4 969.9,227.8 968.8,231.1 C967.6,234.4 966.5,237.8 965.3,241.1 C964.1,244.4 962.9,247.8 961.7,251.1 C960.5,254.4 959.3,257.8 958.0,261.1 C956.7,264.4 955.5,267.8 954.2,271.1 C952.9,274.4 951.6,277.8 950.3,281.1 C949.0,284.4 947.7,287.8 946.4,291.1 C945.0,294.4 943.7,297.8 942.4,301.1 C941.0,304.4 939.7,307.8 938.3,311.1 C937.0,314.4 935.6,317.8 934.3,321.1 C932.9,324.4 931.6,327.8 930.2,331.1 C928.9,334.4 927.5,337.8 926.2,341.1 C924.8,344.4 923.5,347.8 922.1,351.1 C920.7,354.4 919.4,357.8 918.0,361.1 C916.7,364.4 915.3,367.8 914.0,371.1 C912.6,374.4 911.3,377.8 909.9,381.1 C908.6,384.4 907.2,387.8 905.8,391.1 C904.5,394.4 903.1,397.8 901.8,401.1 C900.4,404.4 899.0,407.8 897.7,411.1 C896.3,414.4 894.9,417.8 893.5,421.1 C892.1,424.4 890.7,427.8 889.3,431.1 C887.9,434.4 886.5,437.8 885.1,441.1 C883.7,444.4 882.2,447.8 880.8,451.1 C879.3,454.4 877.9,457.8 876.4,461.1 C874.9,464.4 873.4,467.8 871.8,471.1 C870.3,474.4 868.7,477.8 867.2,481.1 C865.6,484.4 864.0,487.8 862.3,491.1 C860.7,494.4 859.0,497.8 857.3,501.1 C855.6,504.4 853.8,507.8 852.0,511.1 C850.2,514.4 848.4,517.8 846.5,521.1 C844.6,524.4 842.6,527.8 840.6,531.1 C838.6,534.4 836.6,537.8 834.5,541.1 C832.4,544.4 830.2,547.8 828.0,551.1 C825.7,554.4 823.4,557.8 821.0,561.1 C818.6,564.4 816.2,567.8 813.6,571.1 C811.1,574.4 808.4,577.8 805.7,581.1 C803.0,584.4 799.3,588.7 797.2,591.1 C795.2,593.5 794.1,594.6 793.5,595.3 Q781,579 762.2,575.7 C762.5,575.2 762.6,575.1 764.0,573.0 C765.5,570.9 768.7,566.3 770.9,563.0 C773.2,559.7 775.5,556.3 777.7,553.0 C780.0,549.7 782.2,546.3 784.4,543.0 C786.6,539.7 788.8,536.3 790.9,533.0 C793.1,529.7 795.3,526.3 797.4,523.0 C799.5,519.7 801.6,516.3 803.7,513.0 C805.8,509.7 807.9,506.3 810.0,503.0 C812.0,499.7 814.1,496.3 816.1,493.0 C818.1,489.7 820.1,486.3 822.1,483.0 C824.1,479.7 826.1,476.3 828.0,473.0 C830.0,469.7 831.9,466.3 833.8,463.0 C835.8,459.7 837.7,456.3 839.5,453.0 C841.4,449.7 843.3,446.3 845.1,443.0 C847.0,439.7 848.8,436.3 850.6,433.0 C852.4,429.7 854.2,426.3 856.0,423.0 C857.8,419.7 860.4,414.7 861.2,413.0 L860.3,403.8 C861.2,402.2 863.9,397.7 865.8,394.5 C867.7,391.3 869.7,387.8 871.6,384.5 C873.5,381.2 875.3,377.8 877.2,374.5 C879.1,371.2 880.9,367.8 882.7,364.5 C884.5,361.2 886.3,357.8 888.1,354.5 C889.8,351.2 891.6,347.8 893.3,344.5 C895.0,341.2 896.7,337.8 898.4,334.5 C900.1,331.2 901.7,327.8 903.3,324.5 C905.0,321.2 906.6,317.8 908.2,314.5 C909.7,311.2 911.3,307.8 912.8,304.5 C914.4,301.2 915.9,297.8 917.4,294.5 C918.9,291.2 920.4,287.8 921.8,284.5 C923.2,281.2 924.7,277.8 926.1,274.5 C927.5,271.2 928.9,267.8 930.2,264.5 C931.6,261.2 932.9,257.8 934.2,254.5 C935.5,251.2 936.8,247.8 938.1,244.5 C939.3,241.2 940.6,237.8 941.8,234.5 C943.0,231.2 944.2,227.8 945.4,224.5 C946.6,221.2 947.7,217.8 948.9,214.5 C950.0,211.2 951.1,207.8 952.2,204.5 C953.3,201.2 954.3,197.8 955.4,194.5 C956.4,191.2 957.4,187.8 958.4,184.5 C959.4,181.2 960.9,176.2 961.3,174.5 Z"/></clipPath>
<path d="M982.9,181.1 C982.5,182.8 981.4,187.8 980.6,191.1 C979.8,194.4 978.9,197.8 978.0,201.1 C977.1,204.4 976.1,207.8 975.1,211.1 C974.1,214.4 973.1,217.8 972.0,221.1 C971.0,224.4 969.9,227.8 968.8,231.1 C967.6,234.4 966.5,237.8 965.3,241.1 C964.1,244.4 962.9,247.8 961.7,251.1 C960.5,254.4 959.3,257.8 958.0,261.1 C956.7,264.4 955.5,267.8 954.2,271.1 C952.9,274.4 951.6,277.8 950.3,281.1 C949.0,284.4 947.7,287.8 946.4,291.1 C945.0,294.4 943.7,297.8 942.4,301.1 C941.0,304.4 939.7,307.8 938.3,311.1 C937.0,314.4 935.6,317.8 934.3,321.1 C932.9,324.4 931.6,327.8 930.2,331.1 C928.9,334.4 927.5,337.8 926.2,341.1 C924.8,344.4 923.5,347.8 922.1,351.1 C920.7,354.4 919.4,357.8 918.0,361.1 C916.7,364.4 915.3,367.8 914.0,371.1 C912.6,374.4 911.3,377.8 909.9,381.1 C908.6,384.4 907.2,387.8 905.8,391.1 C904.5,394.4 903.1,397.8 901.8,401.1 C900.4,404.4 899.0,407.8 897.7,411.1 C896.3,414.4 894.9,417.8 893.5,421.1 C892.1,424.4 890.7,427.8 889.3,431.1 C887.9,434.4 886.5,437.8 885.1,441.1 C883.7,444.4 882.2,447.8 880.8,451.1 C879.3,454.4 877.9,457.8 876.4,461.1 C874.9,464.4 873.4,467.8 871.8,471.1 C870.3,474.4 868.7,477.8 867.2,481.1 C865.6,484.4 864.0,487.8 862.3,491.1 C860.7,494.4 859.0,497.8 857.3,501.1 C855.6,504.4 853.8,507.8 852.0,511.1 C850.2,514.4 848.4,517.8 846.5,521.1 C844.6,524.4 842.6,527.8 840.6,531.1 C838.6,534.4 836.6,537.8 834.5,541.1 C832.4,544.4 830.2,547.8 828.0,551.1 C825.7,554.4 823.4,557.8 821.0,561.1 C818.6,564.4 816.2,567.8 813.6,571.1 C811.1,574.4 808.4,577.8 805.7,581.1 C803.0,584.4 799.3,588.7 797.2,591.1 C795.2,593.5 794.1,594.6 793.5,595.3 Q781,579 762.2,575.7 C762.5,575.2 762.6,575.1 764.0,573.0 C765.5,570.9 768.7,566.3 770.9,563.0 C773.2,559.7 775.5,556.3 777.7,553.0 C780.0,549.7 782.2,546.3 784.4,543.0 C786.6,539.7 788.8,536.3 790.9,533.0 C793.1,529.7 795.3,526.3 797.4,523.0 C799.5,519.7 801.6,516.3 803.7,513.0 C805.8,509.7 807.9,506.3 810.0,503.0 C812.0,499.7 814.1,496.3 816.1,493.0 C818.1,489.7 820.1,486.3 822.1,483.0 C824.1,479.7 826.1,476.3 828.0,473.0 C830.0,469.7 831.9,466.3 833.8,463.0 C835.8,459.7 837.7,456.3 839.5,453.0 C841.4,449.7 843.3,446.3 845.1,443.0 C847.0,439.7 848.8,436.3 850.6,433.0 C852.4,429.7 854.2,426.3 856.0,423.0 C857.8,419.7 860.4,414.7 861.2,413.0 L860.3,403.8 C861.2,402.2 863.9,397.7 865.8,394.5 C867.7,391.3 869.7,387.8 871.6,384.5 C873.5,381.2 875.3,377.8 877.2,374.5 C879.1,371.2 880.9,367.8 882.7,364.5 C884.5,361.2 886.3,357.8 888.1,354.5 C889.8,351.2 891.6,347.8 893.3,344.5 C895.0,341.2 896.7,337.8 898.4,334.5 C900.1,331.2 901.7,327.8 903.3,324.5 C905.0,321.2 906.6,317.8 908.2,314.5 C909.7,311.2 911.3,307.8 912.8,304.5 C914.4,301.2 915.9,297.8 917.4,294.5 C918.9,291.2 920.4,287.8 921.8,284.5 C923.2,281.2 924.7,277.8 926.1,274.5 C927.5,271.2 928.9,267.8 930.2,264.5 C931.6,261.2 932.9,257.8 934.2,254.5 C935.5,251.2 936.8,247.8 938.1,244.5 C939.3,241.2 940.6,237.8 941.8,234.5 C943.0,231.2 944.2,227.8 945.4,224.5 C946.6,221.2 947.7,217.8 948.9,214.5 C950.0,211.2 951.1,207.8 952.2,204.5 C953.3,201.2 954.3,197.8 955.4,194.5 C956.4,191.2 957.4,187.8 958.4,184.5 C959.4,181.2 960.9,176.2 961.3,174.5 Z" fill="#c9d095"/>
<g clip-path="url(#gRibClip)"><path d="M982.9,181.1 C982.5,182.8 981.4,187.8 980.6,191.1 C979.8,194.4 978.9,197.8 978.0,201.1 C977.1,204.4 976.1,207.8 975.1,211.1 C974.1,214.4 973.1,217.8 972.0,221.1 C971.0,224.4 969.9,227.8 968.8,231.1 C967.6,234.4 966.5,237.8 965.3,241.1 C964.1,244.4 962.9,247.8 961.7,251.1 C960.5,254.4 959.3,257.8 958.0,261.1 C956.7,264.4 955.5,267.8 954.2,271.1 C952.9,274.4 951.6,277.8 950.3,281.1 C949.0,284.4 947.7,287.8 946.4,291.1 C945.0,294.4 943.7,297.8 942.4,301.1 C941.0,304.4 939.7,307.8 938.3,311.1 C937.0,314.4 935.6,317.8 934.3,321.1 C932.9,324.4 931.6,327.8 930.2,331.1 C928.9,334.4 927.5,337.8 926.2,341.1 C924.8,344.4 923.5,347.8 922.1,351.1 C920.7,354.4 919.4,357.8 918.0,361.1 C916.7,364.4 915.3,367.8 914.0,371.1 C912.6,374.4 911.3,377.8 909.9,381.1 C908.6,384.4 907.2,387.8 905.8,391.1 C904.5,394.4 903.1,397.8 901.8,401.1 C900.4,404.4 899.0,407.8 897.7,411.1 C896.3,414.4 894.9,417.8 893.5,421.1 C892.1,424.4 890.7,427.8 889.3,431.1 C887.9,434.4 886.5,437.8 885.1,441.1 C883.7,444.4 882.2,447.8 880.8,451.1 C879.3,454.4 877.9,457.8 876.4,461.1 C874.9,464.4 873.4,467.8 871.8,471.1 C870.3,474.4 868.7,477.8 867.2,481.1 C865.6,484.4 864.0,487.8 862.3,491.1 C860.7,494.4 859.0,497.8 857.3,501.1 C855.6,504.4 853.8,507.8 852.0,511.1 C850.2,514.4 848.4,517.8 846.5,521.1 C844.6,524.4 842.6,527.8 840.6,531.1 C838.6,534.4 836.6,537.8 834.5,541.1 C832.4,544.4 830.2,547.8 828.0,551.1 C825.7,554.4 823.4,557.8 821.0,561.1 C818.6,564.4 816.2,567.8 813.6,571.1 C811.1,574.4 808.4,577.8 805.7,581.1 C803.0,584.4 799.3,588.7 797.2,591.1 C795.2,593.5 794.1,594.6 793.5,595.3" fill="none" stroke="#adb482" stroke-width="22" opacity="0.75" filter="url(#blur4)"/></g>
<path d="M972.1,514.8 L879.5,543.8 C877.2,545.6 869.4,550.3 865.7,554.9 C862.0,559.5 859.4,565.6 857.4,571.4 C855.4,577.1 853.8,582.5 854.0,589.4 C854.2,596.3 856.1,606.2 858.8,612.9 C861.4,619.6 866.2,625.7 869.9,629.5 C873.6,633.3 877.4,634.6 880.9,635.7 C884.4,636.9 889.0,636.3 890.6,636.4 L1016.5,594 L1068.1,577.3 L1069.3,565.3 L1075.3,548.4 L990.1,576 L990.1,556 C990.1,552 989,549 986.5,544.8 C984,540 980,535 976.9,528 C976,526 974,520 972.1,514.8 Z" fill="url(#gFold)"/>
<path d="M979.3,580.5 L1075.3,548.4 L1069.3,565.3 L976,597 Z" fill="#abb282"/>
<path d="M976,597 L1069.3,565.3 L1068.1,577.3 L973.3,608.5 Z" fill="#b3ba87"/>
<g fill="none" stroke="#000" stroke-width="1.9" stroke-linejoin="round" stroke-linecap="round">
<path d="M1014.8,72.6 L1016.2,74 L1016,499.2 L972.1,514.8 C974,520 976,526 976.9,528 C980,535 984,540 986.5,544.8 C989,549 990.1,552 990.1,556 L990.1,576 L1075.3,548.4 L1069.3,565.3 L1068.1,577.3 L1016.5,594 L1015.7,758.1 L972.7,827.2 L972.7,748 C977,744 979.5,737 979.1,729 C978.5,718 973,710.8 965.8,710.8 C958,710.8 953,719 953,729 C953,737 954.5,743 956.5,746 L956,747.5 L944.6,760.7 L944.6,668.6 L855.8,765.8 L855.8,664.8 L840.5,678.8 L841.8,575.9 L827,588.7 L827,549.4 L828.0,551.1 L821.0,561.1 L813.6,571.1 L805.7,581.1 L797.2,591.1 L793.5,595.3 Q781,579 762.2,575.7 C762.5,575.2 762.6,575.1 764.0,573.0 C765.5,570.9 768.7,566.3 770.9,563.0 C773.2,559.7 775.5,556.3 777.7,553.0 C780.0,549.7 782.2,546.3 784.4,543.0 C786.6,539.7 788.8,536.3 790.9,533.0 C793.1,529.7 795.3,526.3 797.4,523.0 C799.5,519.7 801.6,516.3 803.7,513.0 C805.8,509.7 807.9,506.3 810.0,503.0 C812.0,499.7 814.1,496.3 816.1,493.0 C818.1,489.7 820.1,486.3 822.1,483.0 C824.1,479.7 826.1,476.3 828.0,473.0 C830.0,469.7 831.9,466.3 833.8,463.0 C835.8,459.7 837.7,456.3 839.5,453.0 C841.4,449.7 843.3,446.3 845.1,443.0 C847.0,439.7 848.8,436.3 850.6,433.0 C852.4,429.7 854.2,426.3 856.0,423.0 C857.8,419.7 860.4,414.7 861.2,413.0 L860.3,403.8 C861.2,402.2 863.9,397.7 865.8,394.5 C867.7,391.3 869.7,387.8 871.6,384.5 C873.5,381.2 875.3,377.8 877.2,374.5 C879.1,371.2 880.9,367.8 882.7,364.5 C884.5,361.2 886.3,357.8 888.1,354.5 C889.8,351.2 891.6,347.8 893.3,344.5 C895.0,341.2 896.7,337.8 898.4,334.5 C900.1,331.2 901.7,327.8 903.3,324.5 C905.0,321.2 906.6,317.8 908.2,314.5 C909.7,311.2 911.3,307.8 912.8,304.5 C914.4,301.2 915.9,297.8 917.4,294.5 C918.9,291.2 920.4,287.8 921.8,284.5 C923.2,281.2 924.7,277.8 926.1,274.5 C927.5,271.2 928.9,267.8 930.2,264.5 C931.6,261.2 932.9,257.8 934.2,254.5 C935.5,251.2 936.8,247.8 938.1,244.5 C939.3,241.2 940.6,237.8 941.8,234.5 C943.0,231.2 944.2,227.8 945.4,224.5 C946.6,221.2 947.7,217.8 948.9,214.5 C950.0,211.2 951.1,207.8 952.2,204.5 C953.3,201.2 954.3,197.8 955.4,194.5 C956.4,191.2 957.4,187.8 958.4,184.5 C959.4,181.2 960.9,176.2 961.3,174.5 L982.9,181.1 C982.6,179.4 987.6,174.4 990.4,171.0 C993.2,167.6 996.0,164.7 998.0,160.8 C1000.0,156.9 1001.1,152.0 1002.2,147.4 C1003.3,142.8 1003.7,138.1 1004.5,133.0 C1005.3,127.9 1006.3,122.5 1007.2,117.0 C1008.1,111.5 1009.1,105.3 1010.0,100.0 C1010.9,94.7 1011.5,89.8 1012.3,85.2 C1013.1,80.6 1014.4,74.7 1014.8,72.6 Z"/>
<path d="M982.9,181.1 C982.5,182.8 981.4,187.8 980.6,191.1 C979.8,194.4 978.9,197.8 978.0,201.1 C977.1,204.4 976.1,207.8 975.1,211.1 C974.1,214.4 973.1,217.8 972.0,221.1 C971.0,224.4 969.9,227.8 968.8,231.1 C967.6,234.4 966.5,237.8 965.3,241.1 C964.1,244.4 962.9,247.8 961.7,251.1 C960.5,254.4 959.3,257.8 958.0,261.1 C956.7,264.4 955.5,267.8 954.2,271.1 C952.9,274.4 951.6,277.8 950.3,281.1 C949.0,284.4 947.7,287.8 946.4,291.1 C945.0,294.4 943.7,297.8 942.4,301.1 C941.0,304.4 939.7,307.8 938.3,311.1 C937.0,314.4 935.6,317.8 934.3,321.1 C932.9,324.4 931.6,327.8 930.2,331.1 C928.9,334.4 927.5,337.8 926.2,341.1 C924.8,344.4 923.5,347.8 922.1,351.1 C920.7,354.4 919.4,357.8 918.0,361.1 C916.7,364.4 915.3,367.8 914.0,371.1 C912.6,374.4 911.3,377.8 909.9,381.1 C908.6,384.4 907.2,387.8 905.8,391.1 C904.5,394.4 903.1,397.8 901.8,401.1 C900.4,404.4 899.0,407.8 897.7,411.1 C896.3,414.4 894.9,417.8 893.5,421.1 C892.1,424.4 890.7,427.8 889.3,431.1 C887.9,434.4 886.5,437.8 885.1,441.1 C883.7,444.4 882.2,447.8 880.8,451.1 C879.3,454.4 877.9,457.8 876.4,461.1 C874.9,464.4 873.4,467.8 871.8,471.1 C870.3,474.4 868.7,477.8 867.2,481.1 C865.6,484.4 864.0,487.8 862.3,491.1 C860.7,494.4 859.0,497.8 857.3,501.1 C855.6,504.4 853.8,507.8 852.0,511.1 C850.2,514.4 848.4,517.8 846.5,521.1 C844.6,524.4 842.6,527.8 840.6,531.1 C838.6,534.4 836.6,537.8 834.5,541.1 C832.4,544.4 830.2,547.8 828.0,551.1 C825.7,554.4 823.4,557.8 821.0,561.1 C818.6,564.4 816.2,567.8 813.6,571.1 C811.1,574.4 808.4,577.8 805.7,581.1 C803.0,584.4 799.3,588.7 797.2,591.1 C795.2,593.5 794.1,594.6 793.5,595.3"/>
<path d="M972.1,514.8 L879.5,543.8 C877.2,545.6 869.4,550.3 865.7,554.9 C862.0,559.5 859.4,565.6 857.4,571.4 C855.4,577.1 853.8,582.5 854.0,589.4 C854.2,596.3 856.1,606.2 858.8,612.9 C861.4,619.6 866.2,625.7 869.9,629.5 C873.6,633.3 877.4,634.6 880.9,635.7 C884.4,636.9 889.0,636.3 890.6,636.4 L1016.5,594 L1068.1,577.3 L1069.3,565.3 L1075.3,548.4 L990.1,576 L990.1,556 C990.1,552 989,549 986.5,544.8 C984,540 980,535 976.9,528 C976,526 974,520 972.1,514.8 Z"/>
<path d="M973.3,527 L883,556.2 C881.5,557.1 876.5,559.3 874.0,561.8 C871.5,564.3 869.4,566.8 867.8,571.4 C866.2,576.0 864.5,583.4 864.3,589.4 C864.1,595.4 865.0,602.8 866.4,607.4 C867.8,612.0 870.2,614.4 872.6,617.0 C875.0,619.6 877.8,621.9 880.9,623.3 C884.0,624.7 889.6,625.0 891.3,625.3 L1069.3,565.3"/>
<path d="M987.7,544.8 L894,574.2 C892.7,575.4 888.0,578.3 886.4,581.1 C884.8,583.9 884.4,587.6 884.4,590.8 C884.4,594.0 885.1,597.9 886.4,600.4 C887.7,602.9 890.0,604.9 892.0,606.0 C894.0,607.1 897.2,607.1 898.2,607.3 L990.1,576"/>
<path d="M990,555.6 L896.1,585.2 C895.7,585.5 894.1,586.3 893.5,587.2 C892.9,588.1 892.6,589.5 892.7,590.8 C892.8,592.1 893.1,593.9 894.0,594.9 C894.9,595.9 897.5,596.6 898.2,597.0 L990.1,568.9"/>
<path d="M879.5,543.8 C880.2,545.8 881.6,550.9 884.0,556.0 C886.4,561.1 891.8,569.5 894.0,574.2 C896.2,578.9 896.7,580.5 897.5,584.0 C898.3,587.5 898.7,591.1 898.8,595.0 C898.9,598.9 899.2,602.6 898.2,607.3 C897.2,612.0 894.3,618.1 893.0,623.0 C891.7,627.9 891.0,634.2 890.6,636.4 M979.3,582 C976,592 974,600 973.3,608.5"/>
</g></g>
</svg>

<!-- dialog -->
<div id="dlg">
  <div class="a" style="left:0;top:0;width:328px;height:30px;background:#fff"></div>
</div>
<div class="t" style="left:33px;top:332px;color:#9a9a9a;letter-spacing:0.07px;">Healing Definition</div>
<div class="t" style="left:281px;top:332px;color:#8a8a8a;font-size:13px;">?</div>
<svg class="a" style="left:324px;top:331px" width="12" height="12"><path d="M1 1L11 11M11 1L1 11" stroke="#6a6a6a" stroke-width="1"/></svg>

<div class="etch" style="left:33px;top:368px;width:309px;height:117px;"></div>
<div class="t" style="left:42.5px;top:363px;padding:0 2px;background:#f0f0f0;letter-spacing:-0.28px;">Elements To Heal:</div>
<div class="a" style="left:36px;top:381px;width:304px;height:77px;border:1px solid #828790;background:#fff;"></div>
<div class="a" style="left:38px;top:383px;width:302px;height:15px;background:#0078d7;"></div>
<div class="t" style="left:40.5px;top:385px;color:#fff;letter-spacing:-0.24px;">Split.2</div>
<div class="btn3d" style="left:37px;top:461px;width:145px;height:23px;"></div>
<div class="btn3d" style="left:182px;top:461px;width:159px;height:23px;"></div>
<div class="t" style="left:80.2px;top:467px;letter-spacing:0.16px;">Add Mode</div>
<div class="t" style="left:223.4px;top:467px;letter-spacing:-0.13px;">Remove Mode</div>

<!-- tab panel -->
<div class="a" style="left:35px;top:516px;width:306px;height:197px;box-sizing:content-box;border-top:1px solid #7a9cc4;border-left:1px solid #7a9cc4;border-right:1px solid #000;border-bottom:1px solid #000;box-shadow:inset -1px -1px 0 #555;"></div>
<div class="tab" style="left:119px;top:494px;width:54px;height:23px;border-bottom:1px solid #7a9cc4"></div>
<div class="tab" style="left:173px;top:494px;width:75px;height:23px;border-bottom:1px solid #7a9cc4"></div>
<div class="tab" style="left:248px;top:494px;width:88px;height:23px;border-bottom:1px solid #7a9cc4"></div>
<div class="tab" style="left:35px;top:492px;width:85px;height:25px;border-bottom:none"></div>
<div class="t" style="left:47.5px;top:499px;letter-spacing:-0.4px;">Parameters</div>
<div class="t" style="left:128.6px;top:499px;letter-spacing:-0.99px;">Freeze</div>
<div class="t" style="left:183.2px;top:499px;letter-spacing:-0.6px;">Sharpness</div>
<div class="t" style="left:258.2px;top:499px;letter-spacing:-0.14px;">Visualization</div>

<div class="t" style="left:39.6px;top:526px;letter-spacing:0.11px;">Continuity:</div>
<div class="a" style="left:194px;top:520px;width:142px;height:21px;border:1px solid #adadad;background:#e1e1e1;"></div>
<div class="t" style="left:198.5px;top:526px;letter-spacing:0px;">Point</div>
<svg class="a" style="left:324px;top:528px" width="11" height="7"><path d="M0.5 0.5L5.5 5.5L10.5 0.5" stroke="#444" fill="none" stroke-width="1"/></svg>

<div class="t" style="left:39.6px;top:552px;letter-spacing:-0.07px;">Merging distance:</div>
<div class="t" style="left:39.6px;top:581px;letter-spacing:-0.17px;">Distance objective:</div>
<div class="t" style="left:39.3px;top:611px;letter-spacing:-0.22px;">Tangency angle:</div>
<div class="t" style="left:39.3px;top:641px;letter-spacing:-0.12px;">Tangency objective:</div>

<div class="a" style="left:197px;top:546px;width:134px;height:20px;box-sizing:border-box;border-top:2px solid #6d6d6d;border-left:2px solid #6d6d6d;background:#fff;box-shadow:1px 1px 0 #fff;"></div>
<svg class="a" style="left:313px;top:546px" width="19" height="21">
<rect x="0" y="0" width="18" height="20" fill="#6d6d6d"/>
<rect x="1" y="2" width="16" height="8.6" fill="#e6e6e6"/><path d="M1.7,10.5 V2.7 H16" fill="none" stroke="#fff" stroke-width="1.4"/><path d="M2,10 H16.4 V2.5" fill="none" stroke="#a0a0a0" stroke-width="1.2"/>
<rect x="1" y="11.6" width="16" height="7.6" fill="#e6e6e6"/><path d="M1.7,19 V12.3 H16" fill="none" stroke="#fff" stroke-width="1.4"/><path d="M2,18.6 H16.4 V12.3" fill="none" stroke="#a0a0a0" stroke-width="1.2"/>
<path d="M9.5,4 L12.9,7.6 L6.1,7.6 Z" fill="#000"/><path d="M6.2,13.3 L12.8,13.3 L9.5,16.6 Z" fill="#fff" stroke="#000" stroke-width="1.1"/>
</svg>
<div class="t" style="left:202.4px;top:550px;letter-spacing:-0.27px;">0.001mm</div>
<div class="a" style="left:197px;top:576px;width:134px;height:20px;box-sizing:border-box;border-top:2px solid #6d6d6d;border-left:2px solid #6d6d6d;background:#fff;box-shadow:1px 1px 0 #fff;"></div>
<svg class="a" style="left:313px;top:576px" width="19" height="21">
<rect x="0" y="0" width="18" height="20" fill="#6d6d6d"/>
<rect x="1" y="2" width="16" height="8.6" fill="#e6e6e6"/><path d="M1.7,10.5 V2.7 H16" fill="none" stroke="#fff" stroke-width="1.4"/><path d="M2,10 H16.4 V2.5" fill="none" stroke="#a0a0a0" stroke-width="1.2"/>
<rect x="1" y="11.6" width="16" height="7.6" fill="#e6e6e6"/><path d="M1.7,19 V12.3 H16" fill="none" stroke="#fff" stroke-width="1.4"/><path d="M2,18.6 H16.4 V12.3" fill="none" stroke="#a0a0a0" stroke-width="1.2"/>
<path d="M9.5,4 L12.9,7.6 L6.1,7.6 Z" fill="#000"/><path d="M6.2,13.3 L12.8,13.3 L9.5,16.6 Z" fill="#fff" stroke="#000" stroke-width="1.1"/>
</svg>
<div class="t" style="left:202.4px;top:580px;letter-spacing:-0.27px;">0.001mm</div>
<div class="a" style="left:197px;top:606px;width:134px;height:20px;box-sizing:border-box;border-top:2px solid #6d6d6d;border-left:2px solid #6d6d6d;background:#f0f0f0;box-shadow:1px 1px 0 #fff;"></div>
<svg class="a" style="left:313px;top:606px" width="19" height="21">
<rect x="0" y="0" width="18" height="20" fill="#6d6d6d"/>
<rect x="1" y="2" width="16" height="8.6" fill="#e6e6e6"/><path d="M1.7,10.5 V2.7 H16" fill="none" stroke="#fff" stroke-width="1.4"/><path d="M2,10 H16.4 V2.5" fill="none" stroke="#a0a0a0" stroke-width="1.2"/>
<rect x="1" y="11.6" width="16" height="7.6" fill="#e6e6e6"/><path d="M1.7,19 V12.3 H16" fill="none" stroke="#fff" stroke-width="1.4"/><path d="M2,18.6 H16.4 V12.3" fill="none" stroke="#a0a0a0" stroke-width="1.2"/>
<path d="M7.3,6.6 L9.7,4.4" stroke="#000" stroke-width="1.2"/><path d="M6.2,13.5 H11.8" stroke="#000" stroke-width="1.3"/>
</svg>
<div class="t" style="left:201.8px;top:610px;color:#8d8d8d;letter-spacing:-0.34px;">0.5deg</div>
<div class="a" style="left:197px;top:636px;width:134px;height:20px;box-sizing:border-box;border-top:2px solid #6d6d6d;border-left:2px solid #6d6d6d;background:#f0f0f0;box-shadow:1px 1px 0 #fff;"></div>
<svg class="a" style="left:313px;top:636px" width="19" height="21">
<rect x="0" y="0" width="18" height="20" fill="#6d6d6d"/>
<rect x="1" y="2" width="16" height="8.6" fill="#e6e6e6"/><path d="M1.7,10.5 V2.7 H16" fill="none" stroke="#fff" stroke-width="1.4"/><path d="M2,10 H16.4 V2.5" fill="none" stroke="#a0a0a0" stroke-width="1.2"/>
<rect x="1" y="11.6" width="16" height="7.6" fill="#e6e6e6"/><path d="M1.7,19 V12.3 H16" fill="none" stroke="#fff" stroke-width="1.4"/><path d="M2,18.6 H16.4 V12.3" fill="none" stroke="#a0a0a0" stroke-width="1.2"/>
<path d="M7.3,6.6 L9.7,4.4" stroke="#000" stroke-width="1.2"/><path d="M6.2,13.5 H11.8" stroke="#000" stroke-width="1.3"/>
</svg>
<div class="t" style="left:201.8px;top:640px;color:#8d8d8d;letter-spacing:-0.34px;">0.5deg</div>

<svg class="a" style="left:40px;top:668px" width="12" height="12"><rect x="0.5" y="0.5" width="11" height="11" fill="#fff" stroke="#336d99" stroke-width="1"/><path d="M2,5.6 L5,8.8 L9.8,3.2" fill="none" stroke="#2d75ad" stroke-width="2.2"/></svg>
<svg class="a" style="left:40px;top:691px" width="12" height="12"><rect x="0.5" y="0.5" width="11" height="11" fill="#fff" stroke="#336d99" stroke-width="1"/><path d="M2,5.6 L5,8.8 L9.8,3.2" fill="none" stroke="#2d75ad" stroke-width="2.2"/></svg>
<div class="t" style="left:56.2px;top:669px;letter-spacing:-0.39px;">Freeze Plane elements</div>
<div class="t" style="left:56.2px;top:692px;letter-spacing:-0.27px;">Freeze Canonic elements</div>

<div class="pbtn" style="left:118px;top:729px;width:70px;height:19px;"></div>
<div class="pbtn" style="left:196px;top:729px;width:70px;height:19px;"></div>
<div class="pbtn" style="left:274px;top:729px;width:70px;height:19px;"></div>
<div class="t" style="left:145.4px;top:733px;letter-spacing:-0.5px;">OK</div>
<div class="t" style="left:213.4px;top:733px;letter-spacing:-0.29px;">Cancel</div>
<div class="t" style="left:288.2px;top:733px;letter-spacing:-0.35px;">Preview</div>

</body></html>
